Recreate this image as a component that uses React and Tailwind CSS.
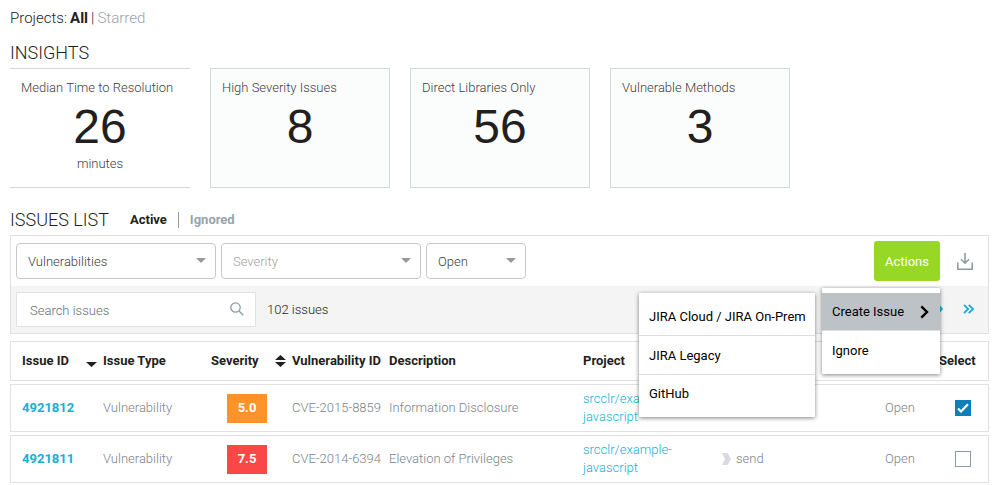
import { useState } from "react";

const insights = [
  { title: "Median Time to Resolution", value: 26, unit: "minutes" },
  { title: "High Severity Issues", value: 8 },
  { title: "Direct Libraries Only", value: 56 },
  { title: "Vulnerable Methods", value: 3 },
];

const issues = [
  { id: "4921812", score: "5.0", high: false, cve: "CVE-2015-8859", description: "Information Disclosure", library: "", selected: true },
  { id: "4921811", score: "7.5", high: true, cve: "CVE-2014-6394", description: "Elevation of Privileges", library: "send", selected: false },
];

function InsightCard({ title, value, unit }) {
  const look = unit ? "border-y" : "border bg-[#fbfdfc]";
  return (
    <div className={`flex h-[120px] w-[180px] flex-col border-[#d5d8db] px-[11px] pt-[9px] ${look}`}>
      <h3 className="whitespace-nowrap text-[13px] leading-5 text-[#3c4043]">{title}</h3>
      <p className="text-center font-['Liberation_Sans',Arial,sans-serif] text-[48px] leading-[58px] font-normal text-[#231f20]">{value}</p>
      {unit && <p className="text-center text-[13px] leading-4 text-[#3c4043]">{unit}</p>}
    </div>
  );
}

function Dropdown({ label, options, width, tone }) {
  return (
    <div className={`relative ${width}`}>
      <select
        aria-label={label}
        className={`h-9 w-full appearance-none rounded-[4px] border border-[#c8c8c8] bg-white pt-px pl-[11px] pr-8 text-[13px] font-light ${tone}`}
      >
        {options.map((o) => (
          <option key={o}>{o}</option>
        ))}
      </select>
      <svg className="pointer-events-none absolute right-[10px] top-[15px] h-[5px] w-[10px]" viewBox="0 0 10 5" fill="#999">
        <path d="M0 0h10L5 5z" />
      </svg>
    </div>
  );
}

function ActionsMenu() {
  return (
    <div className="relative">
      <button type="button" className="h-10 w-[66px] rounded-[3px] bg-[#97d725] pt-px text-[13px] font-normal text-white">
        Actions
      </button>
      <div className="absolute right-0 top-full z-10 mt-[7px] w-[118px] rounded-[1px] bg-white pt-[5px] pb-1 font-normal text-black shadow-[0_1px_4px_rgba(0,0,0,0.5)]">
        <button type="button" className="flex h-[38px] w-full items-center justify-between border-b border-[#dedede] bg-[#bdc2c6] pl-[10px] pr-[11px] text-[13px]">
          Create Issue
          <svg className="h-[14px] w-[9px]" viewBox="0 0 9 14" fill="none" stroke="#000" strokeWidth="2.4">
            <path d="M1.3 1.3 7 7l-5.700 5.700" />
          </svg>
        </button>
        <button type="button" className="flex h-[39px] w-full items-center pl-[10px] text-[13px]">Ignore</button>
        <div className="absolute right-full top-[5px] mr-[7px] w-[176px] rounded-[1px] bg-white pt-1 pb-1 shadow-[0_1px_4px_rgba(0,0,0,0.5)]">
          <button type="button" className="flex h-[39px] w-full items-center whitespace-nowrap border-b border-[#dedede] pt-px pl-[10px] text-[13px]">
            JIRA Cloud / JIRA On-Prem
          </button>
          <button type="button" className="flex h-[39px] w-full items-center border-b border-[#dedede] pt-px pl-[10px] text-[13px]">JIRA Legacy</button>
          <button type="button" className="flex h-[38px] w-full items-center pl-[10px] text-[13px]">GitHub</button>
        </div>
      </div>
    </div>
  );
}

function IssueRow({ issue }) {
  const [selected, setSelected] = useState(issue.selected);
  return (
    <tr className="h-12 text-[#7c838a] [&>td]:border-y [&>td]:border-[#e0e1e2] [&>td]:p-0">
      <td className="border-l">
        <a href="#issue" className="ml-[11px] font-bold text-[#19aed6]">{issue.id}</a>
      </td>
      <td>Vulnerability</td>
      <td>
        <span className={`ml-4 flex h-[29px] w-10 items-center justify-center font-bold text-white ${issue.high ? "bg-[#f94846]" : "bg-[#ff9229]"}`}>
          {issue.score}
        </span>
      </td>
      <td className="whitespace-nowrap">{issue.cve}</td>
      <td>{issue.description}</td>
      <td className="leading-[18px]">
        <a href="#project" className="block w-[100px] text-[#19aed6]">srcclr/example-javascript</a>
      </td>
      <td>
        {issue.library && (
          <span className="flex items-center gap-[5px]">
            <svg className="h-3 w-[9px]" viewBox="0 0 9 12" fill="#d9dbe0">
              <path d="M0 0h5.500L9 6l-3.500 6H0l3-6z" />
            </svg>
            {issue.library}
          </span>
        )}
      </td>
      <td>Open</td>
      <td className="border-r">
        <label className="relative ml-4 flex size-4">
          <input
            type="checkbox"
            aria-label={`Select issue ${issue.id}`}
            checked={selected}
            onChange={(e) => setSelected(e.target.checked)}
            className="size-4 appearance-none border border-[#8c9ba5] bg-white checked:border-[#0f7fb8] checked:bg-[#0f7fb8]"
          />
          {selected && (
            <svg className="pointer-events-none absolute inset-0 size-4" viewBox="0 0 16 16" fill="none" stroke="#fff" strokeWidth="2.2">
              <path d="m3 8.500 3 3 7-7.200" />
            </svg>
          )}
        </label>
      </td>
    </tr>
  );
}

export default function App() {
  return (
    <main className="bg-white px-[10px] pt-2 font-[Roboto,sans-serif] text-[13px] font-light text-[#231f20]">
      <nav className="flex gap-[3px] text-[15px] leading-5">
        <span>Projects:</span>
        <a href="#all" className="font-bold">All</a>
        <span>|</span>
        <a href="#starred" className="text-[#95a4ae]">Starred</a>
      </nav>

      <h2 className="mt-[13px] text-[18px] leading-6">INSIGHTS</h2>
      <section className="mt-[3px] flex gap-5">
        {insights.map((i) => (
          <InsightCard key={i.title} {...i} />
        ))}
      </section>

      <div className="mt-5 flex items-center">
        <h2 className="text-[18px] leading-6">ISSUES LIST</h2>
        <a href="#active" className="ml-[21px] border-r border-[#8c9ba5] pr-[11px] font-bold leading-4">Active</a>
        <a href="#ignored" className="ml-[11px] font-bold leading-4 text-[#95a4ae]">Ignored</a>
      </div>

      <section className="mt-[3px] border border-[#e0e1e2]">
        <div className="flex h-[50px] items-center gap-[5px] px-[5px]">
          <Dropdown label="Issue type" options={["Vulnerabilities"]} width="w-[200px]" tone="text-[#3c4043]" />
          <Dropdown label="Severity" options={["Severity"]} width="w-[200px]" tone="text-[#a0a2a4]" />
          <Dropdown label="Status" options={["Open"]} width="w-[100px]" tone="text-[#3c4043]" />
          <div className="ml-auto flex items-center gap-[17px] pr-[10px]">
            <ActionsMenu />
            <button type="button" aria-label="Download">
              <svg className="h-[17px] w-4" viewBox="0 0 16 17" fill="none" stroke="#8c9ba5" strokeWidth="1.600">
                <path d="M.8 9.500v6.700h14.400V9.500M8 0v10M4 6.200l4 4 4-4" />
              </svg>
            </button>
          </div>
        </div>
        <div className="flex h-[47px] items-center bg-[#f4f4f4] px-[5px]">
          <div className="relative w-60">
            <input
              type="text"
              aria-label="Search issues"
              placeholder="Search issues"
              className="h-[35px] w-full border border-[#e0e1e2] bg-white pt-px pl-[13px] pr-9 text-[13px] font-light placeholder:text-[#6a6e71] placeholder:opacity-100"
            />
            <svg className="absolute right-3 top-[10px] size-[14px]" viewBox="0 0 14 14" fill="none" stroke="#8c9ba5" strokeWidth="1.300">
              <circle cx="5.500" cy="5.500" r="4.700" />
              <path d="m9 9 4.300 4.300" />
            </svg>
          </div>
          <span className="ml-[11px]">102 issues</span>
          <div className="ml-auto flex items-center gap-5 pr-[9px] pb-[2px]">
            <button type="button" aria-label="Next page">
              <svg className="h-[10px] w-[6px]" viewBox="0 0 6 10" fill="none" stroke="#19aed6" strokeWidth="1.800">
                <path d="m1 1 4 4-4 4" />
              </svg>
            </button>
            <button type="button" aria-label="Last page">
              <svg className="h-[10px] w-[11px]" viewBox="0 0 11 10" fill="none" stroke="#19aed6" strokeWidth="1.800">
                <path d="m1 .8 4.200 4.200L1 9.200M5.800.8 10 5 5.800 9.200" />
              </svg>
            </button>
          </div>
        </div>
      </section>

      <table className="mt-1 w-full table-fixed border-separate border-spacing-x-0 border-spacing-y-[3px] text-left">
        <colgroup>
          <col className="w-[93px]" />
          <col className="w-[108px]" />
          <col className="w-[81px]" />
          <col className="w-[97px]" />
          <col />
          <col className="w-[139px]" />
          <col className="w-[163px]" />
          <col className="w-[54px]" />
          <col className="w-[50px]" />
        </colgroup>
        <thead>
          <tr className="h-10 [&>th]:border-y [&>th]:border-[#e0e1e2] [&>th]:p-0 [&>th]:font-bold">
            <th className="border-l">
              <div className="flex items-center justify-between pl-[11px] pr-[6px]">
                Issue ID
                <svg className="h-3 w-[11px]" viewBox="0 0 11 12" fill="#231f20">
                  <path d="M0 7h11L5.500 12z" />
                </svg>
              </div>
            </th>
            <th>Issue Type</th>
            <th>
              <div className="flex items-center justify-between pr-[6px]">
                Severity
                <svg className="h-3 w-[11px]" viewBox="0 0 11 12" fill="#231f20">
                  <path d="M0 5h11L5.500 0zM0 7h11L5.500 12z" />
                </svg>
              </div>
            </th>
            <th className="whitespace-nowrap">Vulnerability ID</th>
            <th>Description</th>
            <th>Project</th>
            <th />
            <th />
            <th className="border-r">Select</th>
          </tr>
        </thead>
        <tbody>
          {issues.map((issue) => (
            <IssueRow key={issue.id} issue={issue} />
          ))}
        </tbody>
      </table>
    </main>
  );
}
